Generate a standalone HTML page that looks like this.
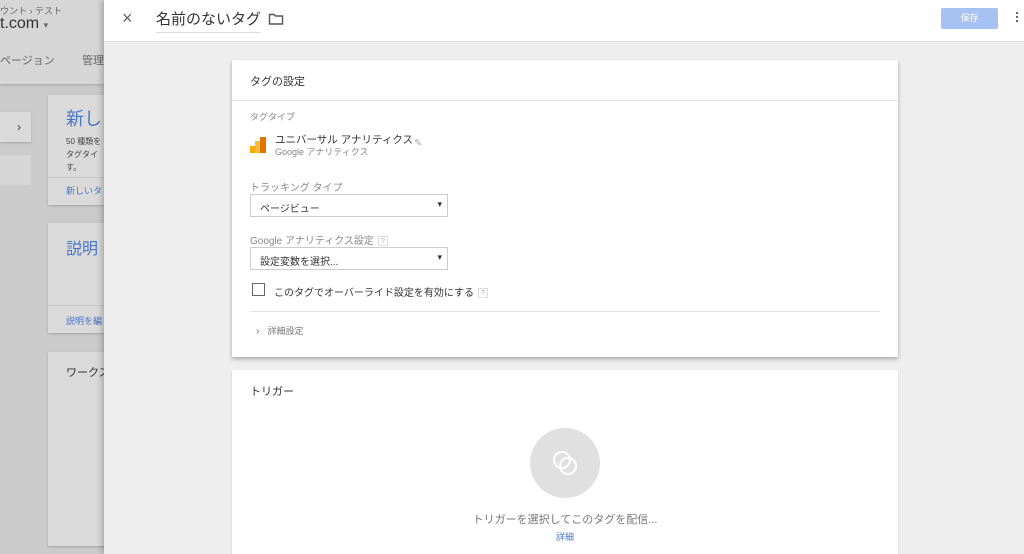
<!DOCTYPE html><html><head><meta charset="utf-8"><style>
*{margin:0;padding:0;box-sizing:border-box}
html,body{width:1024px;height:554px;overflow:hidden}
body{position:relative;font-family:"Liberation Sans","Noto Sans CJK JP",sans-serif;background:#cbcbcb;color:#222;white-space:nowrap}
.a{position:absolute}
.lc{background:#dadada;box-shadow:0 1px 2px rgba(0,0,0,.2);overflow:hidden}
.panel{left:104px;top:0;width:920px;height:554px;background:#eeeeee;box-shadow:-2px 0 6px rgba(0,0,0,.25);overflow:hidden}
.hdr{left:0;top:0;width:920px;height:42px;background:#fff;border-bottom:1px solid #e0e0e0}
.card{background:#fff;box-shadow:0 2px 4px rgba(0,0,0,.3)}
.lbl{font-size:10px;color:#888}
.sel{border:1px solid #ccc;height:23px;width:198px;font-size:10px;color:#333;padding:5px 9px;background:#fff}
.sel:after{content:"▾";position:absolute;right:5px;top:4px;font-size:9px;color:#333}
.q{display:inline-block;width:10px;height:10px;border:1px solid #ddd;font-size:7px;color:#aaa;text-align:center;line-height:9px;vertical-align:middle;margin-left:4px}
</style></head><body>
<div class="a" style="left:0;top:0;width:104px;height:84px;background:#d6d6d6;box-shadow:0 1px 3px rgba(0,0,0,.2)"></div>
<div class="a" style="left:0;top:4px;font-size:9px;color:#666">ウント › テスト</div>
<div class="a" style="left:0;top:15px;font-size:16px;color:#333">t.com <span style="font-size:9px;color:#666">▾</span></div>
<div class="a" style="left:0;top:52px;font-size:11px;color:#666">ページョン</div>
<div class="a" style="left:82px;top:52px;font-size:11px;color:#666">管理</div>
<div class="a lc" style="left:0;top:112px;width:31px;height:30px;font-size:12px;color:#333;text-align:right;padding:8px 10px 0 0">›</div>
<div class="a" style="left:0;top:155px;width:31px;height:30px;background:#d6d6d6"></div>
<div class="a lc" style="left:48px;top:95px;width:60px;height:110px"><div style="padding:10px 18px;font-size:18px;color:#4a76c7">新しい</div><div style="padding:0 18px;font-size:8px;color:#444;line-height:13px;margin-top:-6px">50 種類を<br>タグタイ<br>す。</div><div style="position:absolute;top:82px;left:0;width:60px;border-top:1px solid #c8c8c8;padding:6px 18px;font-size:9px;color:#4a76c7">新しいタ</div></div>
<div class="a lc" style="left:48px;top:223px;width:60px;height:110px"><div style="padding:12px 18px;font-size:16px;color:#4a76c7">説明</div><div style="position:absolute;top:82px;left:0;width:60px;border-top:1px solid #c8c8c8;padding:8px 18px;font-size:9px;color:#4a76c7">説明を編</div></div>
<div class="a lc" style="left:48px;top:352px;width:60px;height:194px"><div style="padding:12px 18px;font-size:11px;color:#333">ワークス</div></div>
<div class="a panel">
<div class="a hdr">
<div class="a" style="left:18px;top:8px;font-size:18px;color:#666">×</div>
<div class="a" style="left:52px;top:8px;font-size:15px;color:#333;border-bottom:1px solid #ddd;padding-bottom:3px">名前のないタグ</div>
<svg class="a" style="left:164px;top:12px" width="16" height="14" viewBox="0 0 16 14"><path d="M1.5 2.5h4.5l1.5 1.5h7v8h-13z" fill="none" stroke="#555" stroke-width="1.4"/></svg>
<div class="a" style="left:837px;top:8px;width:57px;height:21px;background:#a7c2f2;border-radius:2px;color:#fff;font-size:9px;text-align:center;line-height:21px">保存</div>
<div class="a" style="left:912px;top:12px;width:2px;height:2px;background:#666;box-shadow:0 4px 0 #666,0 8px 0 #666"></div>
</div>
<div class="a card" style="left:128px;top:60px;width:666px;height:297px">
<div style="height:41px;border-bottom:1px solid #e4e4e4;padding:13px 18px;font-size:11px;color:#333">タグの設定</div>
<div class="a lbl" style="left:18px;top:50px;font-size:9px">タグタイプ</div>
<svg class="a" style="left:18px;top:77px" width="16" height="16"><rect x="0" y="9" width="6" height="7" fill="#f9ab00"/><rect x="5" y="4" width="6" height="12" fill="#f3bd3b"/><rect x="10" y="0" width="6" height="16" fill="#e37400"/></svg>
<div class="a" style="left:43px;top:72px;font-size:10.5px;color:#333">ユニバーサル アナリティクス</div>
<div class="a" style="left:43px;top:85px;font-size:9px;color:#888">Google アナリティクス</div>
<div class="a" style="left:182px;top:78px;font-size:10px;color:#aaa">✎</div>
<div class="a lbl" style="left:18px;top:119px">トラッキング タイプ</div>
<div class="a sel" style="left:18px;top:134px">ページビュー</div>
<div class="a lbl" style="left:18px;top:172px">Google アナリティクス設定<span class="q">?</span></div>
<div class="a sel" style="left:18px;top:187px">設定変数を選択...</div>
<div class="a" style="left:20px;top:223px;width:13px;height:13px;border:1.5px solid #666"></div>
<div class="a" style="left:42px;top:224px;font-size:10px;color:#333">このタグでオーバーライド設定を有効にする<span class="q">?</span></div>
<div class="a" style="left:18px;top:251px;width:630px;border-top:1px solid #e4e4e4"></div>
<div class="a" style="left:24px;top:264px;font-size:10px;color:#666">›&nbsp;&nbsp;&nbsp;<span style="font-size:9px;color:#777">詳細設定</span></div>
</div>
<div class="a card" style="left:128px;top:370px;width:666px;height:200px;box-shadow:0 1px 2px rgba(0,0,0,.15)">
<div class="a" style="left:18px;top:13px;font-size:11px;color:#333">トリガー</div>
<div class="a" style="left:298px;top:58px;width:70px;height:70px;border-radius:50%;background:#e0e0e0"></div>
<svg class="a" style="left:318px;top:78px" width="30" height="30"><circle cx="12" cy="12" r="8" fill="none" stroke="#fff" stroke-width="2"/><circle cx="18" cy="18" r="8" fill="none" stroke="#fff" stroke-width="2"/></svg>
<div class="a" style="left:0;width:666px;top:141px;text-align:center;font-size:11px;color:#777">トリガーを選択してこのタグを配信...</div>
<div class="a" style="left:0;width:666px;top:160px;text-align:center;font-size:9px;color:#4a76c7">詳細</div>
</div>
</div>
</body></html>
